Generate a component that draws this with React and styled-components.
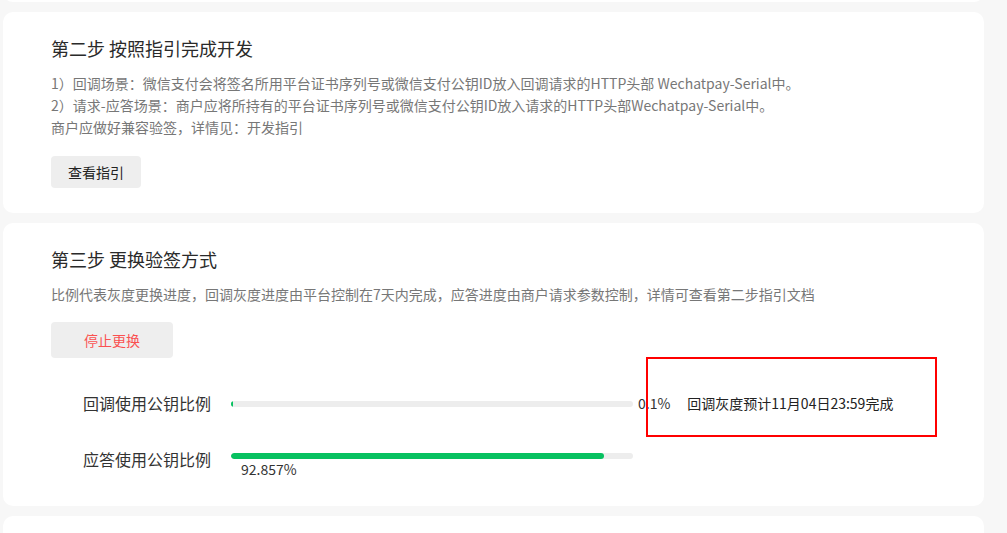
import React from 'react';
import styled, { createGlobalStyle } from 'styled-components';

const GlobalStyle = createGlobalStyle`
  html, body { margin: 0; padding: 0; background: #f7f7f7; }
  body {
    font-family: "Noto Sans CJK SC", "Noto Sans", "Liberation Sans", sans-serif;
    color: #333;
    overflow: hidden;
  }
`;

const progress = [
  { label: '回调使用公钥比例', value: 0.1, text: '0.1%', note: '回调灰度预计11月04日23:59完成', inline: true },
  { label: '应答使用公钥比例', value: 92.857, text: '92.857%' },
];

function App() {
  return (
    <>
      <GlobalStyle />
      <Page>
        <Card $stub />
        <Card>
          <Title>第二步 按照指引完成开发</Title>
          <Body>
            <div>1）回调场景：微信支付会将签名所用平台证书序列号或微信支付公钥ID放入回调请求的HTTP头部 Wechatpay-Serial中。</div>
            <div>2）请求-应答场景：商户应将所持有的平台证书序列号或微信支付公钥ID放入请求的HTTP头部Wechatpay-Serial中。</div>
            <div>商户应做好兼容验签，详情见：开发指引</div>
          </Body>
          <Button>查看指引</Button>
        </Card>
        <Card>
          <Title>第三步 更换验签方式</Title>
          <Body>比例代表灰度更换进度，回调灰度进度由平台控制在7天内完成，应答进度由商户请求参数控制，详情可查看第二步指引文档</Body>
          <Button $danger>停止更换</Button>
          <ProgressList>
            {progress.map((p) => (
              <ProgressRow key={p.label}>
                <Label>{p.label}</Label>
                <BarWrap $inline={p.inline}>
                  <Track>
                    <Fill style={{ width: `${p.value}%` }} />
                  </Track>
                  {!p.inline && <BelowPercent>{p.text}</BelowPercent>}
                </BarWrap>
                {p.inline && <Percent>{p.text}</Percent>}
                {p.note && (
                  <Note>
                    {p.note}
                    <Highlight />
                  </Note>
                )}
              </ProgressRow>
            ))}
          </ProgressList>
        </Card>
        <Card $stub />
      </Page>
    </>
  );
}

const Page = styled.div`
  display: flex; flex-direction: column; gap: 10px;
  padding: 0 23px 0 3px;
  margin-top: -48px;
`;

const Card = styled.div`
  background: #fff;
  border-radius: 10px;
  padding: 23px 48px 25px;
  height: ${(p) => (p.$stub ? '50px' : 'auto')};
  box-sizing: border-box;
  display: flex; flex-direction: column; align-items: flex-start;
`;

const Title = styled.h2`
  margin: 0 0 11px;
  font-size: 18px; font-weight: 400; line-height: 26px;
  color: #2a2a2a;
`;

const Body = styled.div`
  font-size: 14px; line-height: 22px;
  color: #777;
`;

const Button = styled.button`
  margin-top: ${(p) => (p.$danger ? 17 : 18)}px;
  border: 0; border-radius: 4px;
  background: #eee;
  font-family: inherit; font-size: 14px;
  height: ${(p) => (p.$danger ? 36 : 32)}px;
  padding: 0 ${(p) => (p.$danger ? 33 : 17)}px;
  color: ${(p) => (p.$danger ? '#fa5151' : '#222')};
`;

const ProgressList = styled.div`
  margin-top: 35px;
  padding: 0 0 3px 32px;
  display: flex; flex-direction: column; gap: 36px;
`;

const ProgressRow = styled.div`
  display: flex; align-items: flex-start;
`;

const Label = styled.div`
  width: 148px;
  font-size: 16px; line-height: 20px;
  color: #333;
`;

const BarWrap = styled.div`
  width: 402px;
  padding-top: ${(p) => (p.$inline ? 8 : 4)}px;
`;

const Track = styled.div`
  height: 6px; border-radius: 3px;
  background: #ededed;
  overflow: hidden;
`;

const Fill = styled.div`
  height: 100%; border-radius: 3px;
  background: #07c160;
  min-width: 2px;
`;

const Percent = styled.div`
  margin-left: 5px;
  font-size: 14px; line-height: 20px;
  color: #333;
`;

const BelowPercent = styled.div`
  margin: 1px 0 0 10px;
  font-size: 14px; line-height: 18px;
  color: #333;
`;

const Note = styled.div`
  position: relative;
  margin-left: 17px;
  font-size: 14px; line-height: 20px;
  color: #222;
`;

const Highlight = styled.div`
  position: absolute;
  left: -41px; top: -36px;
  width: 291px; height: 80px;
  border: 2px solid #f00;
  box-sizing: border-box;
  pointer-events: none;
`;

export default App;
